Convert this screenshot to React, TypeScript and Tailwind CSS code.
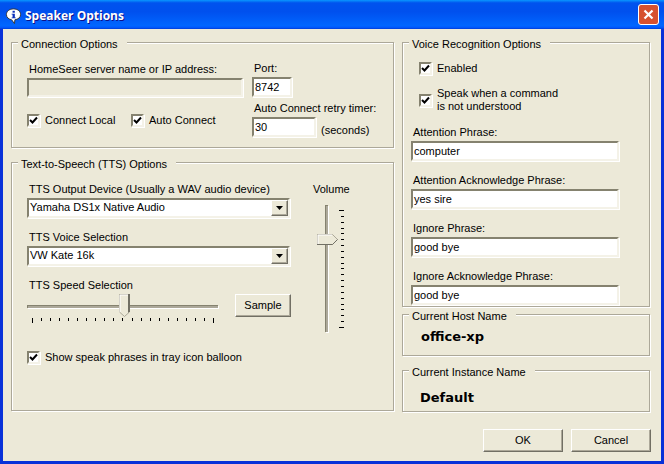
const inset = "border-2 border-t-[#85826f] border-l-[#85826f] border-b-[#f4f2e8] border-r-[#f4f2e8] shadow-[1px_1px_0_#fff]";
const raised = "border border-t-white border-l-white border-r-[#716f64] border-b-[#716f64] shadow-[inset_-1px_-1px_0_#aca899]";
const track = "border-t border-l border-[#85826f] bg-[#aca899] shadow-[1px_1px_0_#fff]";

function Group({ title, className, children }: { title: string; className: string; children?: React.ReactNode }) {
  return (
    <div className={`relative border border-[#aca899] shadow-[1px_1px_0_#fff,inset_1px_1px_0_#fff] ${className}`}>
      <span className="absolute -top-[6px] left-[6px] bg-[#ece9d8] pl-[3px] pr-[9px] leading-[14px]">{title}</span>
      {children}
    </div>
  );
}

function Check({ label, className }: { label: React.ReactNode; className?: string }) {
  return (
    <div className={`flex items-center gap-[5px] ${className ?? ""}`}>
      <div className={`w-[13px] h-[13px] shrink-0 bg-white ${inset} flex items-center justify-center`}>
        <svg width="9" height="9" viewBox="0 0 9 9" className="shrink-0">
          <path d="M1 4 L3.5 6.5 L8 1.5" fill="none" stroke="#000" strokeWidth="2" />
        </svg>
      </div>
      <div className="leading-[13px]">{label}</div>
    </div>
  );
}

function Field({ value, className }: { value?: string; className: string }) {
  return (
    <div className={`${inset} bg-white pl-[1px] leading-[16px] ${className}`}>{value}</div>
  );
}

function Select({ value }: { value: string }) {
  return (
    <div className={`${inset} bg-white h-[20px] w-[263px] flex items-center justify-between`}>
      <span className="pl-[1px] -mt-[1px]">{value}</span>
      <div className={`${raised} bg-[#ece9d8] w-[17px] h-[16px] flex items-center justify-center`}>
        <svg width="7" height="4" viewBox="0 0 7 4"><path d="M0 0H7L3.5 4Z" fill="#000" /></svg>
      </div>
    </div>
  );
}

function Button({ label, className }: { label: string; className: string }) {
  return <div className={`${raised} bg-[#ece9d8] flex items-center justify-center ${className}`}>{label}</div>;
}

const ticks = Array.from({ length: 21 }, (_, i) => i);

export default function App() {
  return (
    <div className="w-[664px] h-[464px] flex flex-col overflow-hidden bg-[#0831d9] text-[11px] text-black font-['Liberation_Sans',sans-serif]">
      <div className="h-[29px] shrink-0 flex items-center justify-between pl-[5px] pr-[5px] bg-[linear-gradient(180deg,#0997ff_0%,#0053ee_10%,#0050ee_40%,#0066ff_88%,#005bff_94%,#003dd7_100%)]">
        <div className="flex items-center gap-[3px] pt-[2px]">
          <svg width="17" height="18" viewBox="0 0 18 18">
            <path d="M9 1.5C4.5 1.5 1.5 4 1.5 7.5C1.5 10.5 4 12.5 7 13L10 17L10.5 13C14 12.5 16.5 10.5 16.5 7.5C16.5 4 13.5 1.5 9 1.5Z" fill="#fff" stroke="#333" strokeWidth="1" />
            <rect x="8" y="3.5" width="2.4" height="2" fill="#0a2fb8" />
            <path d="M7 6.5H10.4V10.5H11.4V11.5H7V10.5H8V7.5H7Z" fill="#0a2fb8" />
          </svg>
          <span className="text-white font-bold text-[12px] font-['Open_Sans',sans-serif] [text-shadow:1px_1px_0_#0f1089]">Speaker Options</span>
        </div>
        <div className="w-[21px] h-[21px] rounded-[3px] border border-white bg-[#d6512f] flex items-center justify-center">
          <svg width="11" height="11" viewBox="0 0 11 11"><path d="M1.5 1.5L9.5 9.5M9.5 1.5L1.5 9.5" stroke="#fff" strokeWidth="2.2" /></svg>
        </div>
      </div>

      <div className="flex-1 mx-[3px] mb-[3px] bg-[#ece9d8] pl-[8px] pt-[13px] flex flex-col">
        <div className="flex gap-[8px]">
          <div className="w-[383px] flex flex-col gap-[14px]">
            <Group title="Connection Options" className="h-[106px] flex pl-[15px] pt-[19px]">
              <div className="w-[225px]">
                <div className="pl-[2px] leading-[14px]">HomeSeer server name or IP address:</div>
                <Field className="!bg-[#ece9d8] w-[216px] h-[19px] mt-[2px]" />
                <div className="flex mt-[17px]">
                  <Check label="Connect Local" className="w-[104px]" />
                  <Check label="Auto Connect" />
                </div>
              </div>
              <div className="-mt-[1px]">
                <div className="pl-[2px] leading-[14px]">Port:</div>
                <Field value="8742" className="w-[40px] h-[20px] mt-[2px]" />
                <div className="pl-[2px] leading-[14px] mt-[4px]">Auto Connect retry timer:</div>
                <div className="flex items-end gap-[5px] mt-[2px]">
                  <Field value="30" className="w-[64px] h-[20px]" />
                  <span className="leading-[14px]">(seconds)</span>
                </div>
              </div>
            </Group>

            <Group title="Text-to-Speech (TTS) Options" className="h-[249px] flex pl-[15px] pt-[19px]">
              <div className="w-[275px]">
                <div className="pl-[2px] leading-[14px]">TTS Output Device (Usually a WAV audio device)</div>
                <div className="mt-[2px]"><Select value="Yamaha DS1x Native Audio" /></div>
                <div className="pl-[2px] leading-[14px] mt-[12px]">TTS Voice Selection</div>
                <div className="mt-[2px]"><Select value="VW Kate 16k" /></div>
                <div className="pl-[2px] leading-[14px] mt-[12px]">TTS Speed Selection</div>
                <div className="flex mt-[2px]">
                  <div className="w-[191px]">
                    <div className="relative h-[23px] flex items-center">
                      <div className={`w-full h-[3px] mt-[1px] ${track}`} />
                      <svg className="absolute left-[92px] top-0" width="11" height="23" viewBox="0 0 11 23">
                        <path d="M0.5 0.5H10.5V18L5.5 22.5L0.5 18Z" fill="#ece9d8" stroke="#aca899" />
                        <path d="M1 18V1H9.5" fill="none" stroke="#fff" />
                        <path d="M9.5 0V18.5M10.5 0V18" fill="none" stroke="#716f64" />
                      </svg>
                    </div>
                    <div className="flex justify-between pl-[5px] pr-[4px] mt-[1px]">
                      {ticks.map((i) => (
                        <div key={i} className={`w-[1px] ${i === 0 || i === 20 ? "h-[5px]" : "h-[3px]"} bg-black`} />
                      ))}
                    </div>
                  </div>
                  <Button label="Sample" className="w-[56px] h-[23px] ml-[17px]" />
                </div>
                <Check label="Show speak phrases in tray icon balloon" className="mt-[28px]" />
              </div>
              <div className="flex flex-col items-start">
                <div className="pl-[11px] leading-[14px]">Volume</div>
                <div className="relative flex h-[127px] mt-[9px] pl-[23px]">
                  <div className={`w-[3px] h-full ${track}`} />
                  <svg className="absolute left-[15px] top-[29px]" width="21" height="11" viewBox="0 0 21 11">
                    <path d="M0.5 0.5H15.5L20.5 5.5L15.5 10.5H0.5Z" fill="#ece9d8" stroke="#aca899" />
                    <path d="M1 10V1H15" fill="none" stroke="#fff" />
                    <path d="M0 10.5H15.5L20.5 5.5" fill="none" stroke="#716f64" />
                  </svg>
                  <div className="flex flex-col justify-between items-end w-[5px] ml-[11px] mt-[5px] h-[118px]">
                    {ticks.map((i) => (
                      <div key={i} className={`h-[1px] ${i === 0 || i === 20 ? "w-[5px]" : "w-[3px]"} bg-black`} />
                    ))}
                  </div>
                </div>
              </div>
            </Group>
          </div>

          <div className="w-[248px] flex flex-col">
            <Group title="Voice Recognition Options" className="h-[265px] pl-[8px] pt-[19px]">
              <Check label="Enabled" className="pl-[8px]" />
              <Check label={<>Speak when a command<br />is not understood</>} className="pl-[8px] mt-[12px]" />
              {[
                ["Attention Phrase:", "computer"],
                ["Attention Acknowledge Phrase:", "yes sire"],
                ["Ignore Phrase:", "good bye"],
                ["Ignore Acknowledge Phrase:", "good bye"],
              ].map(([label, value]) => (
                <div key={label} className="mt-[12px]">
                  <div className="pl-[2px] leading-[14px]">{label}</div>
                  <Field value={value} className="w-[208px] h-[20px] mt-[2px]" />
                </div>
              ))}
            </Group>
            <Group title="Current Host Name" className="h-[42px] mt-[7px] pl-[18px] pt-[14px]">
              <div className="font-bold text-[13px] leading-[16px] font-['DejaVu_Sans',sans-serif]">office-xp</div>
            </Group>
            <Group title="Current Instance Name" className="h-[42px] mt-[14px] pl-[17px] pt-[19px]">
              <div className="font-bold text-[13px] leading-[16px] font-['DejaVu_Sans',sans-serif]">Default</div>
            </Group>
          </div>
        </div>

        <div className="flex justify-end gap-[8px] mt-[17px] pr-[10px]">
          <Button label="OK" className="w-[80px] h-[23px]" />
          <Button label="Cancel" className="w-[80px] h-[23px]" />
        </div>
      </div>
    </div>
  );
}
